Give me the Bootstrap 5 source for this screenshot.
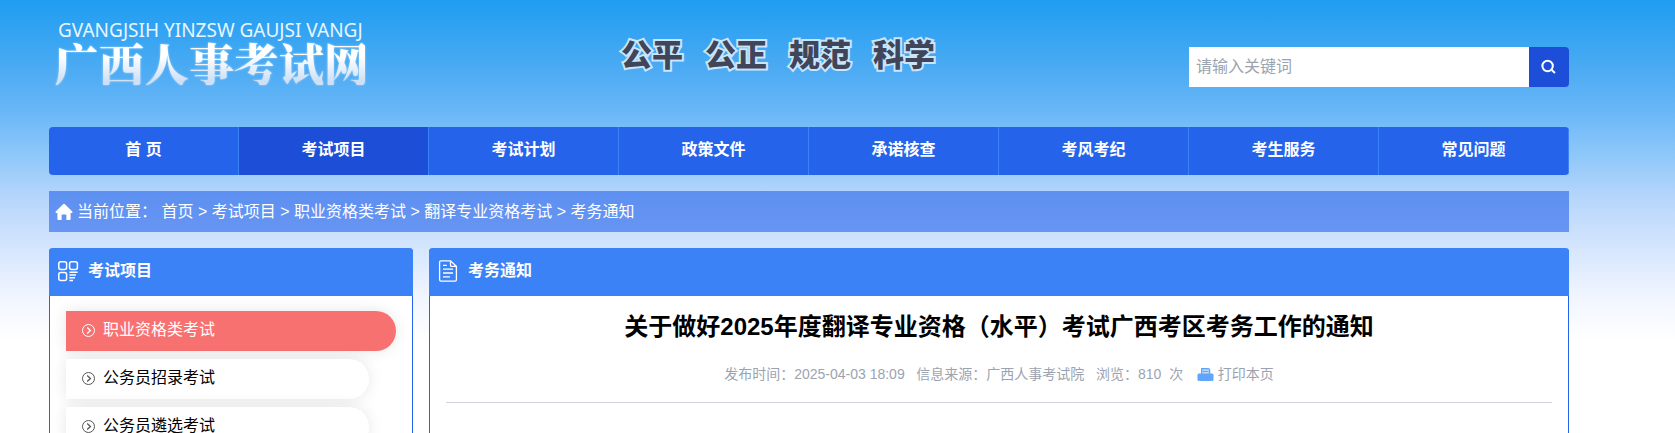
<!DOCTYPE html>
<html lang="zh-CN">
<head>
<meta charset="utf-8">
<meta name="viewport" content="width=device-width, initial-scale=1">
<title>广西人事考试网</title>
<link href="https://cdn.jsdelivr.net/npm/bootstrap@5.3.0/dist/css/bootstrap.min.css" rel="stylesheet">
<style>
  body {
    font: 16px/24px "Liberation Sans", "Noto Sans CJK SC", sans-serif;
    color: #000;
    background: #fff linear-gradient(#1f9df1 0, #4cabf3 70px, #6ab7f8 112px, #93c9fa 160px, #b4d5fb 195px, #d0e3fd 240px, #f0f5ff 295px, #fff 342px) no-repeat;
  }
  a { color: inherit; text-decoration: none; }
  .page { padding: 0 106px 0 49px; height: 100vh; overflow: hidden; }
  .masthead { height: 127px; }
  .brand { width: 316px; padding: 19px 0 0 5px; color: #fff; }
  .brand-latin { font: 19px/22px "Noto Sans", sans-serif; padding-left: 4px; color: #e9f6ff; }
  .brand-name {
    font: 900 45px/44px "Noto Serif CJK SC", "Noto Sans CJK SC", serif;
    background: linear-gradient(#fff 35%, #cfe0f6 90%);
    -webkit-background-clip: text; background-clip: text; color: transparent;
    filter: drop-shadow(0 0 1px #ffffff80);
  }
  .slogan {
    font: 900 31px/40px "Noto Sans CJK SC", sans-serif;
    color: #40455a; gap: 22px; padding-top: 33px; margin-left: 256px;
    -webkit-text-stroke: 4px #c8e5fa; paint-order: stroke fill;
  }
  .search { width: 380px; margin-top: 47px; }
  .search input { height: 40px; border: 0; padding: 0 7px; min-width: 0; outline: 0; }
  .search input::placeholder { color: #9ca3af; }
  .search button { width: 40px; height: 40px; border: 0; padding: 0; background: #1d4ed8; border-radius: 0 4px 4px 0; }
  .menu { background: #2563eb; border-radius: 4px; overflow: hidden; }
  .menu a { color: #fff; font-weight: 700; line-height: 46px; padding-bottom: 2px; border-right: 1px solid #3b82f6; }
  .menu a.active { background: #1d4ed8; }
  .trail { background: #2563eb99; color: #fff; height: 41px; margin: 16px 0; padding: 0 6px; }
  .panel { border: 1px solid #2563eb; border-top: 0; border-radius: 4px 4px 0 0; background: #fff; min-height: 240px; }
  .panel-title { background: #3b82f6; color: #fff; font-size: 16px; font-weight: 700; height: 48px; margin: 0 -1px; border-radius: 4px 4px 0 0; padding: 0 8px 2px; gap: 9px; line-height: 24px; }
  .panel-inner { padding: 15px 16px; }
  .kinds a { height: 40px; padding: 0 0 2px 16px; gap: 8px; background: #fff; border-radius: 0 20px 20px 0; box-shadow: 0 0 15px #0000001a; }
  .kinds a.active { background: #f87171; color: #fff; }
  .kinds svg { color: #555; }
  .kinds .active svg { color: #fff; }
  .headline { font-size: 24px; line-height: 32px; font-weight: 700; }
  .facts { font-size: 14px; color: #9ca3af; line-height: 24px; gap: 6px; padding: 19px 0 16px; border-bottom: 1px solid #d1d5db; white-space: pre; }
</style>
</head>
<body>
<div class="page">
  <header class="masthead d-flex align-items-start">
    <a class="brand d-block" href="#">
      <div class="brand-latin text-nowrap">GVANGJSIH YINZSW GAUJSI VANGJ</div>
      <div class="brand-name text-nowrap">广西人事考试网</div>
    </a>
    <div class="slogan d-flex text-nowrap"><span>公平</span><span>公正</span><span>规范</span><span>科学</span></div>
    <form class="search d-flex ms-auto" role="search">
      <input class="flex-grow-1" type="search" placeholder="请输入关键词" aria-label="请输入关键词">
      <button type="button" aria-label="搜索" class="d-flex align-items-center justify-content-center">
        <svg width="16" height="16" viewBox="0 0 16 16" fill="none" stroke="#fff" stroke-width="2"><circle cx="6.6" cy="7" r="5.2"/><path d="M10.2 10.6l3.8 3.4"/></svg>
      </button>
    </form>
  </header>

  <nav class="menu d-flex text-center">
    <a class="col" href="#">首 页</a>
    <a class="col active" href="#">考试项目</a>
    <a class="col" href="#">考试计划</a>
    <a class="col" href="#">政策文件</a>
    <a class="col" href="#">承诺核查</a>
    <a class="col" href="#">考风考纪</a>
    <a class="col" href="#">考生服务</a>
    <a class="col" href="#">常见问题</a>
  </nav>

  <nav class="trail d-flex align-items-center text-nowrap" aria-label="当前位置">
    <svg class="me-1" width="18" height="18" viewBox="0 0 18 18" fill="#fff"><path d="M9 .8Q9.6.8 10.2 1.4L17.3 8.6Q18 10 16.8 10H15.6V16Q15.6 17 14.6 17H11.4V12.2Q11.4 11.4 10.6 11.4H7.4Q6.6 11.4 6.6 12.2V17H3.4Q2.4 17 2.4 16V10H1.2Q0 10 .7 8.6L7.8 1.4Q8.4.8 9 .8z"/></svg>
    <div>当前位置： <a href="#">首页</a> &gt; <a href="#">考试项目</a> &gt; <a href="#">职业资格类考试</a> &gt; <a href="#">翻译专业资格考试</a> &gt; <a href="#">考务通知</a></div>
  </nav>

  <div class="row g-0">
    <aside class="col-3 pe-3">
      <div class="panel">
        <h2 class="panel-title d-flex align-items-center mb-0">
          <svg width="22" height="22" viewBox="0 0 22 22" fill="none" stroke="#fff" stroke-width="1.5"><rect x="1.8" y="1.8" width="7.8" height="7.8" rx="2"/><rect x="12.6" y="1.8" width="7.8" height="7.8" rx="2"/><rect x="1.8" y="12.6" width="7.8" height="7.8" rx="2"/><path d="M12.4 12.3H20.6M12.4 15H19M12.4 17.8H18M12.4 20.4H16"/></svg>
          考试项目
        </h2>
        <div class="panel-inner kinds d-flex flex-column gap-2">
          <a class="active d-flex align-items-center" href="#"><svg width="13" height="13" viewBox="0 0 13 13" fill="none" stroke="currentColor"><circle cx="6.5" cy="6.5" r="6"/><path stroke-width="1.3" d="M5.2 3.6l3.2 2.9-3.2 2.9"/></svg>职业资格类考试</a>
          <a class="col-11 d-flex align-items-center" href="#"><svg width="13" height="13" viewBox="0 0 13 13" fill="none" stroke="currentColor"><circle cx="6.5" cy="6.5" r="6"/><path stroke-width="1.3" d="M5.2 3.6l3.2 2.9-3.2 2.9"/></svg>公务员招录考试</a>
          <a class="col-11 d-flex align-items-center" href="#"><svg width="13" height="13" viewBox="0 0 13 13" fill="none" stroke="currentColor"><circle cx="6.5" cy="6.5" r="6"/><path stroke-width="1.3" d="M5.2 3.6l3.2 2.9-3.2 2.9"/></svg>公务员遴选考试</a>
        </div>
      </div>
    </aside>
    <main class="col-9">
      <div class="panel">
        <h2 class="panel-title d-flex align-items-center mb-0">
          <svg width="22" height="24" viewBox="0 0 22 24" fill="none" stroke="#fff" stroke-width="1.3"><path d="M13.5 1.8H4Q2.6 1.8 2.6 3.2V20.8Q2.6 22.2 4 22.2H18Q19.4 22.2 19.4 20.8V7.4zM13.5 1.8V6.2Q13.5 7.4 14.7 7.4H19.4M6 6.4H9.8M6 10.2H16M6 14H16M6 17.8H13"/></svg>
          考务通知
        </h2>
        <article class="panel-inner">
          <h1 class="headline text-center mb-0">关于做好2025年度翻译专业资格（水平）考试广西考区考务工作的通知</h1>
          <div class="facts d-flex justify-content-center"><span>发布时间：2025-04-03 18:09   信息来源：广西人事考试院   浏览：810  次  </span><a href="#"><svg width="17" height="16" viewBox="0 0 16 16"><path fill="#60a5fa" d="M3.5 1.5Q3.5 1 4 1H11Q12.8 1.4 12.8 3V6.5H14.6Q16 6.5 16 8V12.8Q16 14 14.8 14H14V13H2V14H1.2Q0 14 0 12.8V8Q0 6.5 1.4 6.5H3.5z"/><path fill="#bfdbfe" d="M4.8 2.4H11.4V6.5H4.8z"/><path stroke="#60a5fa" d="M5 4.5h6M2 13.5h12"/></svg> 打印本页</a></div>
        </article>
      </div>
    </main>
  </div>
</div>
<script src="https://cdn.jsdelivr.net/npm/bootstrap@5.3.0/dist/js/bootstrap.bundle.min.js"></script>
</body>
</html>
